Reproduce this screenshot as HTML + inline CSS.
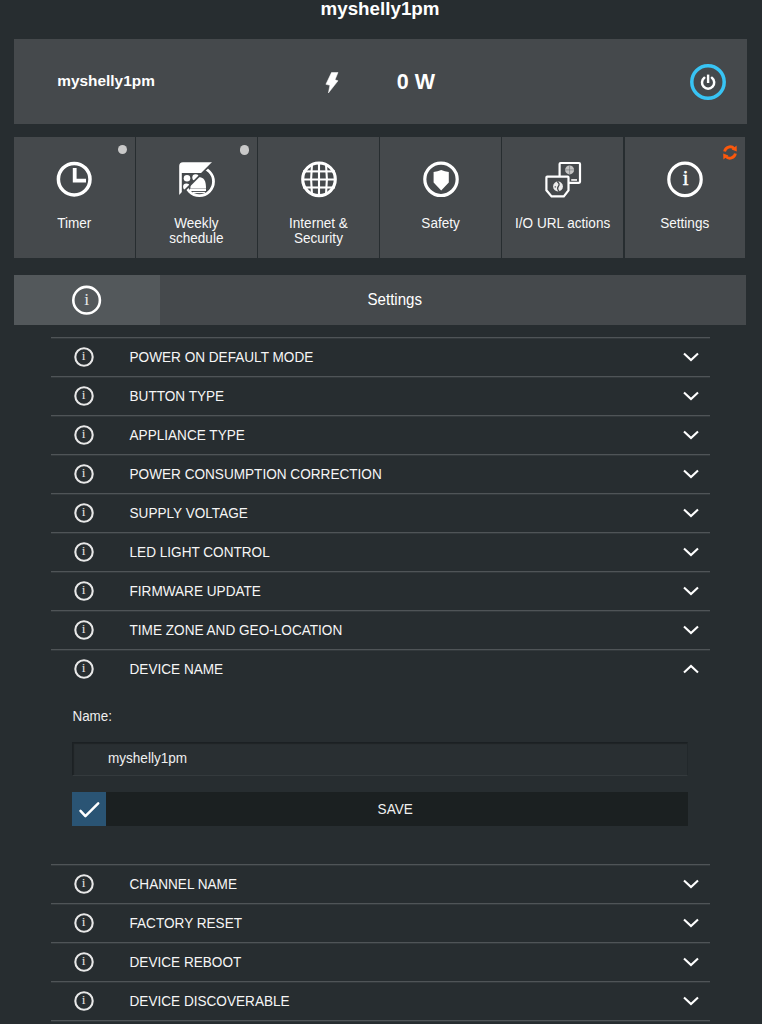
<!DOCTYPE html>
<html><head><meta charset="utf-8">
<style>
*{margin:0;padding:0;box-sizing:border-box}
html,body{width:762px;height:1024px;overflow:hidden;background:#272d30}
body{position:relative;font-family:"Liberation Sans",sans-serif;color:#fff}
.a{position:absolute}
.t{position:absolute;white-space:nowrap;line-height:1}
#title{font-weight:bold;font-size:18.8px;left:320.5px;top:0px}
#panel{left:14px;top:39px;width:733px;height:85px;background:#45494c}
.tile{position:absolute;top:137px;height:120.5px;width:120.5px;background:#45494c}
.tl{position:absolute;left:0;width:100%;text-align:center;font-size:13.55px;line-height:15px;color:#f8f8f8}
.tl div{height:15px;transform:scaleY(1.11);transform-origin:50% 12.2px}
.sy{transform:scaleY(1.12);transform-origin:0 0.8465em}
.dot{position:absolute;width:9.5px;height:9.5px;border-radius:50%;background:#c9c9c9}
#bar{left:14px;top:275px;width:732px;height:50px;background:#45494c}
#bara{left:14px;top:275px;width:146px;height:50px;background:#53585b}
.line{position:absolute;left:51px;width:659px;height:1px;background:#4f5457;box-shadow:0 1px 0 #33393c}
.row{position:absolute;left:51px;width:659px;height:39px}
.rt{position:absolute;left:78.5px;top:13.6px;font-size:13.6px;color:#f6f6f6;white-space:nowrap;line-height:1;transform:scaleY(1.12);transform-origin:0 0.8465em}
.ri{position:absolute;left:21.7px;top:9.1px}
.rc{position:absolute;left:631px;top:14px}
</style></head><body>
<div id="title" class="t">myshelly1pm</div>
<div id="panel" class="a"></div>
<div class="t" style="font-weight:bold;font-size:15.4px;left:57.3px;top:73px">myshelly1pm</div>
<svg class="a" style="left:318px;top:66px" width="28" height="32" viewBox="0 0 28 32"><path d="M13.5 6.5 L20 6.5 L17 13.8 L20 14.8 L10.4 27 L11.9 19.3 L7.9 18.3 Z" fill="#fff" stroke="#fff" stroke-width="0.5" stroke-linejoin="round"/></svg>
<div class="t" style="font-weight:bold;font-size:21.5px;left:396.8px;top:72.2px">0 W</div>
<svg class="a" style="left:688px;top:62px" width="40" height="40" viewBox="0 0 40 40"><circle cx="20" cy="20" r="16.2" fill="none" stroke="#38c4f4" stroke-width="3.5"/><path d="M16.3 15.8 A6.1 6.1 0 1 0 23.9 15.8" fill="none" stroke="#fff" stroke-width="2.5" stroke-linecap="round"/><line x1="20.1" y1="12.6" x2="20.1" y2="21" stroke="#fff" stroke-width="2.4"/></svg>

<!-- tiles -->
<div class="tile" style="left:14px">
  <svg class="a ic1" style="left:40px;top:22px" width="40" height="40" viewBox="0 0 40 40"><circle cx="20.2" cy="20.2" r="15.8" fill="none" stroke="#fff" stroke-width="3.5"/><path d="M18.8 8.9 H22.6 V19.7 H32 V23.4 H18.8 Z" fill="#fff"/></svg>
  <div class="tl" style="top:79px"><div>Timer</div></div>
  <div class="dot" style="left:103.6px;top:7.6px"></div>
</div>
<div class="tile" style="left:136.1px">
  <svg class="a ic2" style="left:39.9px;top:22px" width="44" height="42" viewBox="0 0 44 42"><defs><clipPath id="cu"><polygon points="0,0 39.1,0 0,39.1"/></clipPath><clipPath id="cl"><polygon points="44,0 44,42 0,42 0,41.5 41.5,0"/></clipPath></defs><g clip-path="url(#cu)"><path d="M3.2 7 Q3.2 3.2 7 3.2 H38 V13.9 H5.8 V38 H3.2 Z" fill="#fff"/><circle cx="11" cy="19.3" r="3.3" fill="#fff"/><circle cx="19.6" cy="18.5" r="3.3" fill="#fff"/><circle cx="10.4" cy="27.7" r="3.3" fill="#fff"/></g><g clip-path="url(#cl)"><circle cx="23.4" cy="22.6" r="14.1" fill="none" stroke="#fff" stroke-width="2.8"/><path d="M14.4 29.4 C14.4 21.5 16.5 18 22.2 18 C27.9 18 30 21.5 30 29.4 Z" fill="#fff"/><rect x="13.9" y="29.7" width="16.1" height="2.3" fill="#fff"/><rect x="16.7" y="32.9" width="12.2" height="1.2" fill="#fff"/></g></svg>
  <div class="tl" style="top:79px"><div>Weekly</div><div>schedule</div></div>
  <div class="dot" style="left:103.6px;top:8px"></div>
</div>
<div class="tile" style="left:258.2px">
  <svg class="a ic3" style="left:40.8px;top:22px" width="40" height="40" viewBox="0 0 40 40"><circle cx="20" cy="20.3" r="16.3" fill="none" stroke="#fff" stroke-width="3.1"/><g stroke="#fff" stroke-width="2.1" fill="none"><line x1="4" y1="12.4" x2="36" y2="12.4"/><line x1="3.5" y1="20.5" x2="36.5" y2="20.5"/><line x1="4" y1="28.5" x2="36" y2="28.5"/><line x1="20" y1="4" x2="20" y2="36.5"/><path d="M13 5 Q11.2 20.3 13 35.8"/><path d="M27 5 Q28.8 20.3 27 35.8"/></g></svg>
  <div class="tl" style="top:79px"><div>Internet &amp;</div><div>Security</div></div>
</div>
<div class="tile" style="left:380.3px">
  <svg class="a ic4" style="left:40.7px;top:22px" width="40" height="40" viewBox="0 0 40 40"><circle cx="20" cy="20.3" r="16.2" fill="none" stroke="#fff" stroke-width="3.2"/><path d="M12.6 12.9 Q16.6 12.6 20.2 11 Q23.8 12.6 27.8 12.9 L27.8 23.6 L20.2 31.5 L12.6 23.6 Z" fill="#fff"/></svg>
  <div class="tl" style="top:79px"><div>Safety</div></div>
</div>
<div class="tile" style="left:502.4px">
  <svg class="a ic5" style="left:39.6px;top:21px" width="42" height="42" viewBox="0 0 42 42"><rect x="17.6" y="5" width="20.4" height="19.8" rx="1" fill="none" stroke="#fff" stroke-width="2.2"/><circle cx="27.6" cy="11.9" r="4.5" fill="#c4c4c4"/><g stroke="#6a6f72" stroke-width="0.6"><line x1="27.6" y1="7.5" x2="27.6" y2="16.3"/><line x1="23.2" y1="11.9" x2="32" y2="11.9"/></g><rect x="29.2" y="21" width="5.8" height="1.9" fill="#e0e0e0"/><path d="M4.4 19.4 Q4.4 18.7 5.2 18.7 H25.7 Q26.5 18.7 26.5 19.4 V32.3 L21.8 38.4 H9.6 L4.4 32.3 Z" fill="#45494c" stroke="#fff" stroke-width="2.2"/><circle cx="16" cy="28.5" r="4.9" fill="#ececec"/><path d="M15.2 23.4 Q18.4 26 16.3 28.5 Q14.6 30.6 17.2 33.6" fill="none" stroke="#45494c" stroke-width="1.3"/><circle cx="13.3" cy="28.9" r="0.8" fill="#6a6f72"/></svg>
  <div class="tl" style="top:79px"><div>I/O URL actions</div></div>
</div>
<div class="tile" style="left:624.5px">
  <svg class="a ic6" style="left:40.5px;top:22px" width="40" height="40" viewBox="0 0 40 40"><circle cx="20" cy="20.4" r="16.2" fill="none" stroke="#fff" stroke-width="3.2"/><text x="20.6" y="26.2" text-anchor="middle" font-family="Liberation Serif" font-size="20.5" fill="#fff" stroke="#fff" stroke-width="0.45">i</text></svg>
  <div class="tl" style="top:79px"><div>Settings</div></div>
  <svg class="a" style="left:97.5px;top:6.5px" width="16" height="17" viewBox="0 0 16 17"><path d="M2.6 7.4 A5.6 5.6 0 0 1 12.2 4.6" fill="none" stroke="#fb580c" stroke-width="2.8"/><path d="M13.4 9.6 A5.6 5.6 0 0 1 3.8 12.4" fill="none" stroke="#fb580c" stroke-width="2.8"/><path d="M9.6 5.6 L14.8 7.6 L14.6 1.6 Z" fill="#fb580c"/><path d="M6.4 11.4 L1.2 9.4 L1.4 15.4 Z" fill="#fb580c"/></svg>
</div>

<div id="bar" class="a"></div>
<div id="bara" class="a"></div>
<div class="t sy" style="font-size:15.1px;left:367.5px;top:291.5px">Settings</div>
<svg class="a" style="left:66px;top:280px" width="40" height="40" viewBox="0 0 40 40"><circle cx="20.6" cy="20.2" r="13.3" fill="none" stroke="#fff" stroke-width="2.6"/><text x="20.6" y="25" text-anchor="middle" font-family="Liberation Serif" font-size="17.5" fill="#e8e8e8">i</text></svg>

<div id="list">
<div class="line" style="top:337px"></div>
<div class="row" style="top:337px"><svg class="ri" width="22" height="22" viewBox="0 0 22 22"><circle cx="11" cy="11" r="8.7" fill="none" stroke="#e8e8e8" stroke-width="2.1"/><text x="10.6" y="14.1" text-anchor="middle" font-family="Liberation Serif" font-size="13.4" fill="#e6e6e6">i</text></svg><div class="rt">POWER ON DEFAULT MODE</div><svg class="rc" width="18" height="12" viewBox="0 0 18 12"><path d="M2 2.5 L9 9 L16 2.5" fill="none" stroke="#fff" stroke-width="2.1"/></svg></div>
<div class="line" style="top:376px"></div>
<div class="row" style="top:376px"><svg class="ri" width="22" height="22" viewBox="0 0 22 22"><circle cx="11" cy="11" r="8.7" fill="none" stroke="#e8e8e8" stroke-width="2.1"/><text x="10.6" y="14.1" text-anchor="middle" font-family="Liberation Serif" font-size="13.4" fill="#e6e6e6">i</text></svg><div class="rt">BUTTON TYPE</div><svg class="rc" width="18" height="12" viewBox="0 0 18 12"><path d="M2 2.5 L9 9 L16 2.5" fill="none" stroke="#fff" stroke-width="2.1"/></svg></div>
<div class="line" style="top:415px"></div>
<div class="row" style="top:415px"><svg class="ri" width="22" height="22" viewBox="0 0 22 22"><circle cx="11" cy="11" r="8.7" fill="none" stroke="#e8e8e8" stroke-width="2.1"/><text x="10.6" y="14.1" text-anchor="middle" font-family="Liberation Serif" font-size="13.4" fill="#e6e6e6">i</text></svg><div class="rt">APPLIANCE TYPE</div><svg class="rc" width="18" height="12" viewBox="0 0 18 12"><path d="M2 2.5 L9 9 L16 2.5" fill="none" stroke="#fff" stroke-width="2.1"/></svg></div>
<div class="line" style="top:454px"></div>
<div class="row" style="top:454px"><svg class="ri" width="22" height="22" viewBox="0 0 22 22"><circle cx="11" cy="11" r="8.7" fill="none" stroke="#e8e8e8" stroke-width="2.1"/><text x="10.6" y="14.1" text-anchor="middle" font-family="Liberation Serif" font-size="13.4" fill="#e6e6e6">i</text></svg><div class="rt">POWER CONSUMPTION CORRECTION</div><svg class="rc" width="18" height="12" viewBox="0 0 18 12"><path d="M2 2.5 L9 9 L16 2.5" fill="none" stroke="#fff" stroke-width="2.1"/></svg></div>
<div class="line" style="top:493px"></div>
<div class="row" style="top:493px"><svg class="ri" width="22" height="22" viewBox="0 0 22 22"><circle cx="11" cy="11" r="8.7" fill="none" stroke="#e8e8e8" stroke-width="2.1"/><text x="10.6" y="14.1" text-anchor="middle" font-family="Liberation Serif" font-size="13.4" fill="#e6e6e6">i</text></svg><div class="rt">SUPPLY VOLTAGE</div><svg class="rc" width="18" height="12" viewBox="0 0 18 12"><path d="M2 2.5 L9 9 L16 2.5" fill="none" stroke="#fff" stroke-width="2.1"/></svg></div>
<div class="line" style="top:532px"></div>
<div class="row" style="top:532px"><svg class="ri" width="22" height="22" viewBox="0 0 22 22"><circle cx="11" cy="11" r="8.7" fill="none" stroke="#e8e8e8" stroke-width="2.1"/><text x="10.6" y="14.1" text-anchor="middle" font-family="Liberation Serif" font-size="13.4" fill="#e6e6e6">i</text></svg><div class="rt">LED LIGHT CONTROL</div><svg class="rc" width="18" height="12" viewBox="0 0 18 12"><path d="M2 2.5 L9 9 L16 2.5" fill="none" stroke="#fff" stroke-width="2.1"/></svg></div>
<div class="line" style="top:571px"></div>
<div class="row" style="top:571px"><svg class="ri" width="22" height="22" viewBox="0 0 22 22"><circle cx="11" cy="11" r="8.7" fill="none" stroke="#e8e8e8" stroke-width="2.1"/><text x="10.6" y="14.1" text-anchor="middle" font-family="Liberation Serif" font-size="13.4" fill="#e6e6e6">i</text></svg><div class="rt">FIRMWARE UPDATE</div><svg class="rc" width="18" height="12" viewBox="0 0 18 12"><path d="M2 2.5 L9 9 L16 2.5" fill="none" stroke="#fff" stroke-width="2.1"/></svg></div>
<div class="line" style="top:610px"></div>
<div class="row" style="top:610px"><svg class="ri" width="22" height="22" viewBox="0 0 22 22"><circle cx="11" cy="11" r="8.7" fill="none" stroke="#e8e8e8" stroke-width="2.1"/><text x="10.6" y="14.1" text-anchor="middle" font-family="Liberation Serif" font-size="13.4" fill="#e6e6e6">i</text></svg><div class="rt">TIME ZONE AND GEO-LOCATION</div><svg class="rc" width="18" height="12" viewBox="0 0 18 12"><path d="M2 2.5 L9 9 L16 2.5" fill="none" stroke="#fff" stroke-width="2.1"/></svg></div>
<div class="line" style="top:649px"></div>
<div class="row" style="top:649px"><svg class="ri" width="22" height="22" viewBox="0 0 22 22"><circle cx="11" cy="11" r="8.7" fill="none" stroke="#e8e8e8" stroke-width="2.1"/><text x="10.6" y="14.1" text-anchor="middle" font-family="Liberation Serif" font-size="13.4" fill="#e6e6e6">i</text></svg><div class="rt">DEVICE NAME</div><svg class="rc" width="18" height="12" viewBox="0 0 18 12"><path d="M2 9.5 L9 3 L16 9.5" fill="none" stroke="#fff" stroke-width="2.1"/></svg></div>
<div class="line" style="top:864px"></div>
<div class="row" style="top:864px"><svg class="ri" width="22" height="22" viewBox="0 0 22 22"><circle cx="11" cy="11" r="8.7" fill="none" stroke="#e8e8e8" stroke-width="2.1"/><text x="10.6" y="14.1" text-anchor="middle" font-family="Liberation Serif" font-size="13.4" fill="#e6e6e6">i</text></svg><div class="rt">CHANNEL NAME</div><svg class="rc" width="18" height="12" viewBox="0 0 18 12"><path d="M2 2.5 L9 9 L16 2.5" fill="none" stroke="#fff" stroke-width="2.1"/></svg></div>
<div class="line" style="top:903px"></div>
<div class="row" style="top:903px"><svg class="ri" width="22" height="22" viewBox="0 0 22 22"><circle cx="11" cy="11" r="8.7" fill="none" stroke="#e8e8e8" stroke-width="2.1"/><text x="10.6" y="14.1" text-anchor="middle" font-family="Liberation Serif" font-size="13.4" fill="#e6e6e6">i</text></svg><div class="rt">FACTORY RESET</div><svg class="rc" width="18" height="12" viewBox="0 0 18 12"><path d="M2 2.5 L9 9 L16 2.5" fill="none" stroke="#fff" stroke-width="2.1"/></svg></div>
<div class="line" style="top:942px"></div>
<div class="row" style="top:942px"><svg class="ri" width="22" height="22" viewBox="0 0 22 22"><circle cx="11" cy="11" r="8.7" fill="none" stroke="#e8e8e8" stroke-width="2.1"/><text x="10.6" y="14.1" text-anchor="middle" font-family="Liberation Serif" font-size="13.4" fill="#e6e6e6">i</text></svg><div class="rt">DEVICE REBOOT</div><svg class="rc" width="18" height="12" viewBox="0 0 18 12"><path d="M2 2.5 L9 9 L16 2.5" fill="none" stroke="#fff" stroke-width="2.1"/></svg></div>
<div class="line" style="top:981px"></div>
<div class="row" style="top:981px"><svg class="ri" width="22" height="22" viewBox="0 0 22 22"><circle cx="11" cy="11" r="8.7" fill="none" stroke="#e8e8e8" stroke-width="2.1"/><text x="10.6" y="14.1" text-anchor="middle" font-family="Liberation Serif" font-size="13.4" fill="#e6e6e6">i</text></svg><div class="rt">DEVICE DISCOVERABLE</div><svg class="rc" width="18" height="12" viewBox="0 0 18 12"><path d="M2 2.5 L9 9 L16 2.5" fill="none" stroke="#fff" stroke-width="2.1"/></svg></div>
<div class="line" style="top:1020px"></div>
</div>
<div class="t sy" style="font-size:13.4px;left:72.5px;top:710px;color:#f0f0f0">Name:</div>
<div class="a" style="left:72px;top:742px;width:616px;height:34px;background:#292f32;border-top:1px solid #1b2023;border-left:1px solid #1c2124;border-right:1px solid #22282b;border-bottom:1px solid #343a3d;box-shadow:inset 1px 1px 1px rgba(0,0,0,0.25)"></div>
<div class="t sy" style="font-size:13.55px;left:108px;top:751.6px;color:#f0f0f0">myshelly1pm</div>
<div class="a" style="left:72px;top:792.4px;width:616px;height:34px;background:#1b2021"></div>
<div class="a" style="left:72px;top:792.4px;width:34px;height:34px;background:#2a5474"></div>
<svg class="a" style="left:76px;top:798px" width="26" height="22" viewBox="0 0 26 22"><path d="M4.5 12.9 L9.4 18.1 L22.2 5.4" fill="none" stroke="#fff" stroke-width="2.5" stroke-linecap="round" stroke-linejoin="round"/></svg>
<div class="t sy" style="font-size:13.55px;left:377.6px;top:802.9px;color:#f0f0f0">SAVE</div>
</body></html>
